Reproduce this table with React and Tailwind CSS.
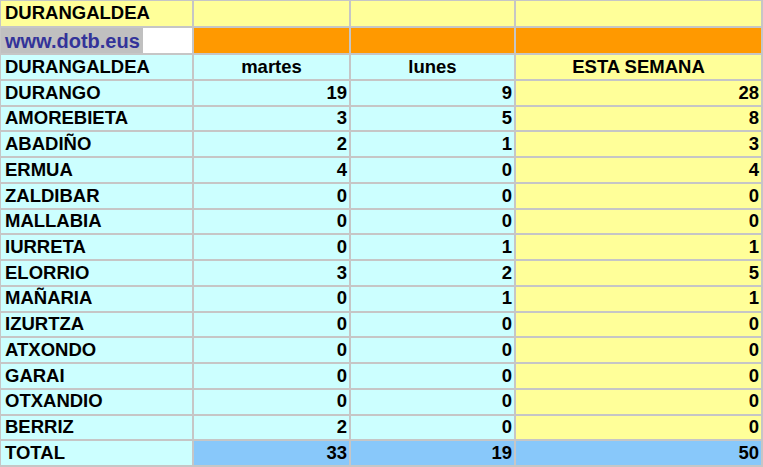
const rows = [
  ["DURANGO", 19, 9, 28],
  ["AMOREBIETA", 3, 5, 8],
  ["ABADIÑO", 2, 1, 3],
  ["ERMUA", 4, 0, 4],
  ["ZALDIBAR", 0, 0, 0],
  ["MALLABIA", 0, 0, 0],
  ["IURRETA", 0, 1, 1],
  ["ELORRIO", 3, 2, 5],
  ["MAÑARIA", 0, 1, 1],
  ["IZURTZA", 0, 0, 0],
  ["ATXONDO", 0, 0, 0],
  ["GARAI", 0, 0, 0],
  ["OTXANDIO", 0, 0, 0],
  ["BERRIZ", 2, 0, 0],
];

const cell = "flex items-center overflow-hidden whitespace-nowrap";
const name = `${cell} bg-[#ccffff] pl-[4px]`;
const num = `${cell} justify-end pr-[2px]`;

export default function App() {
  return (
    <div
      className="w-[763px] h-[467px] bg-[#c6c6c6] pl-[1px] pt-[1px] pr-[2px] pb-[2px] grid grid-cols-[191px_155px_163px_245px] grid-rows-[25px_25px_24px_repeat(15,minmax(0,1fr))] gap-[2px] text-[18.5px] font-bold text-black leading-none"
      style={{ fontFamily: '"Liberation Sans", Arial, sans-serif' }}
    >
      {/* title row */}
      <div className={`${cell} bg-[#ffff99] pl-[4px]`}>DURANGALDEA</div>
      <div className="bg-[#ffff99]" />
      <div className="bg-[#ffff99]" />
      <div className="bg-[#ffff99]" />

      {/* link row */}
      <div className="bg-white flex items-stretch">
        <span className="bg-[#c0c0c0] text-[#333399] text-[20px] flex items-center pl-[4px] pr-[3px]">
          www.dotb.eus
        </span>
      </div>
      <div className="bg-[#ff9900]" />
      <div className="bg-[#ff9900]" />
      <div className="bg-[#ff9900]" />

      {/* header row */}
      <div className={name}>DURANGALDEA</div>
      <div className={`${cell} justify-center bg-[#ccffff]`}>martes</div>
      <div className={`${cell} justify-center bg-[#ccffff]`}>lunes</div>
      <div className={`${cell} justify-center bg-[#ffff99]`}>ESTA SEMANA</div>

      {rows.map(([town, a, b, c]) => (
        <div key={town} className="contents">
          <div className={name}>{town}</div>
          <div className={`${num} bg-[#ccffff]`}>{a}</div>
          <div className={`${num} bg-[#ccffff]`}>{b}</div>
          <div className={`${num} bg-[#ffff99]`}>{c}</div>
        </div>
      ))}

      {/* totals */}
      <div className={name}>TOTAL</div>
      <div className={`${num} bg-[#88c8fa]`}>33</div>
      <div className={`${num} bg-[#88c8fa]`}>19</div>
      <div className={`${num} bg-[#88c8fa]`}>50</div>
    </div>
  );
}
